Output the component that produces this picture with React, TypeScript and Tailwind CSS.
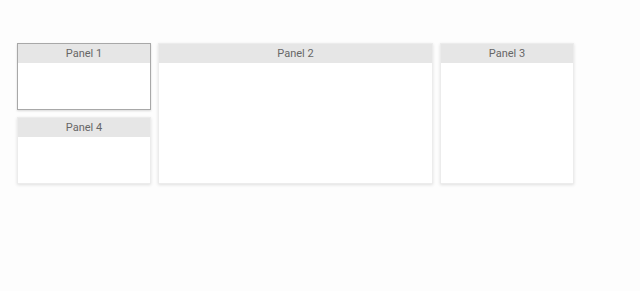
import React from "react"

function Panel({ title, active = false, className = "" }: { title: string; active?: boolean; className?: string }) {
  return (
    <div
      className={`flex flex-col bg-white ${
        active
          ? "border border-[#a8a8a8] shadow-[0_1px_2px_rgba(0,0,0,0.15)]"
          : "border border-[#ececec] shadow-[0_1px_3px_rgba(0,0,0,0.12)]"
      } ${className}`}
    >
      <div className="h-[19px] shrink-0 bg-[#e6e6e6] flex items-center justify-center text-[11px] text-[#666] leading-none">
        {title}
      </div>
      <div className="flex-1" />
    </div>
  )
}

export default function App() {
  return (
    <div className="w-[640px] h-[291px] bg-[#fdfdfd] pt-[43px] pl-[17px]" style={{ fontFamily: "Roboto, sans-serif" }}>
      <div className="grid grid-cols-[134px_275px_134px] grid-rows-[67px_67px] gap-[7px]">
        <Panel title="Panel 1" active className="col-start-1 row-start-1" />
        <Panel title="Panel 4" className="col-start-1 row-start-2" />
        <Panel title="Panel 2" className="col-start-2 row-start-1 row-span-2" />
        <Panel title="Panel 3" className="col-start-3 row-start-1 row-span-2" />
      </div>
    </div>
  )
}
